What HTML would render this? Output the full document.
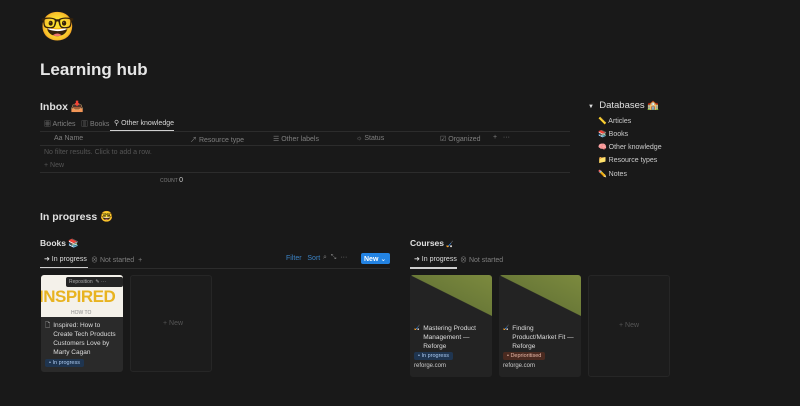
<!DOCTYPE html>
<html><head><meta charset="utf-8"><style>
*{margin:0;padding:0;box-sizing:border-box}
body{width:800px;height:406px;background:#191919;color:#d4d4d4;font-family:"Liberation Sans","Noto Sans CJK JP",sans-serif;position:relative;overflow:hidden;font-size:7px}
.a{position:absolute;white-space:nowrap}
.g{color:#7f7f7f}
.card{position:absolute;background:#232323;border-radius:3px;overflow:hidden}
.line{position:absolute;height:1px;background:#2c2c2c}
.tag{display:inline-block;padding:1px 4px;border-radius:2px;font-size:5.5px}
</style></head><body>
<div class="a" style="left:40px;top:10px;font-size:28px;line-height:34px">🤓</div>
<div class="a" style="left:40px;top:60px;font-size:17px;font-weight:bold;color:#e6e6e6">Learning hub</div>

<div class="a" style="left:40px;top:100px;font-size:10.5px;font-weight:bold;color:#e0e0e0">Inbox 📥</div>
<div class="a g" style="left:44px;top:119px">▦ Articles</div>
<div class="a g" style="left:81px;top:119px">▥ Books</div>
<div class="a" style="left:114px;top:119px;color:#d8d8d8">⚲ Other knowledge</div>
<div class="line" style="left:110px;top:130px;width:64px;height:1.5px;background:#cfcfcf"></div>
<div class="line" style="left:40px;top:131px;width:530px"></div>
<div class="a g" style="left:54px;top:135px">Aa Name</div>
<div class="a g" style="left:190px;top:135px">↗ Resource type</div>
<div class="a g" style="left:273px;top:135px">☰ Other labels</div>
<div class="a g" style="left:356px;top:135px">☼ Status</div>
<div class="a g" style="left:440px;top:135px">☑ Organized</div>
<div class="a g" style="left:493px;top:134px">+ &nbsp; ···</div>
<div class="line" style="left:40px;top:145px;width:530px"></div>
<div class="a" style="left:44px;top:149px;color:#555">No filter results. Click to add a row.</div>
<div class="a" style="left:44px;top:162px;color:#555">+ New</div>
<div class="line" style="left:40px;top:172px;width:530px"></div>
<div class="a g" style="left:160px;top:177px;font-size:5px">COUNT <span style="color:#ccc;font-size:7px">0</span></div>

<div class="a" style="left:40px;top:210px;font-size:10.5px;font-weight:bold;color:#e0e0e0">In progress 🤓</div>

<div class="a" style="left:40px;top:238px;font-size:8.5px;font-weight:bold;color:#e0e0e0">Books 📚</div>
<div class="a" style="left:44px;top:255px;color:#ddd">➜ In progress</div>
<div class="a g" style="left:91px;top:255px">⊗ Not started &nbsp;+</div>
<div class="line" style="left:40px;top:267px;width:48px;height:1.5px;background:#cfcfcf"></div>
<div class="line" style="left:40px;top:268px;width:350px"></div>
<div class="a" style="left:286px;top:255px;color:#3b82c4">Filter &nbsp; Sort</div>
<div class="a g" style="left:323px;top:254px">⌕ &nbsp;⤡ &nbsp;···</div>
<div class="a" style="left:361px;top:253px;width:29px;height:11px;background:#2383e2;border-radius:2px;color:#fff;font-weight:bold;padding:2px 0 0 3px">New <span style="font-weight:normal">⌄</span></div>

<div class="card" style="left:41px;top:275px;width:82px;height:97px;background:#2a2a2a">
 <div style="height:42px;background:#f4f1ea;position:relative">
  <div class="a" style="left:-2px;top:12px;font-size:17px;font-weight:bold;color:#e8b320;letter-spacing:-0.5px">INSPIRED</div>
  <div class="a" style="left:30px;top:35px;font-size:5px;color:#888">HOW TO</div>
  <div class="a" style="left:25px;top:2px;width:57px;height:10px;background:#252525;border-radius:2px;color:#aaa;font-size:5px;padding:2px 3px">Reposition &nbsp;✎ ···</div>
 </div>
 <div style="padding:4px 4px 0 4px;display:flex;gap:3px;font-size:6.5px;line-height:9px;color:#ddd"><span>🗋</span><span>Inspired: How to Create Tech Products Customers Love by Marty Cagan</span></div>
 <div style="padding:2px 4px"><span class="tag" style="background:#1f3550;color:#aac8ee">• In progress</span></div>
</div>
<div class="card" style="left:130px;top:275px;width:82px;height:97px;background:#1c1c1c;border:1px solid #262626"><div class="a g" style="left:32px;top:44px;color:#555">+ New</div></div>

<div class="a" style="left:410px;top:238px;font-size:8.5px;font-weight:bold;color:#e0e0e0">Courses <span style="font-size:6px">🏑</span></div>
<div class="a" style="left:414px;top:255px;color:#ddd">➜ In progress</div>
<div class="a g" style="left:460px;top:255px">⊗ Not started</div>
<div class="line" style="left:410px;top:267px;width:47px;height:1.5px;background:#cfcfcf"></div>

<div class="card" style="left:410px;top:275px;width:82px;height:102px">
 <div style="height:41px;background:linear-gradient(to bottom left,#7c8a3e 0%,#6b7a38 49.5%,#232323 50.5%)"></div>
 <div style="padding:8px 4px 0 4px;display:flex;gap:3px;font-size:6.5px;line-height:9px;color:#ddd"><span style="font-size:5px">🏑</span><span>Mastering Product Management — Reforge</span></div>
 <div style="padding:1px 4px"><span class="tag" style="background:#1f3550;color:#aac8ee">• In progress</span></div>
 <div style="padding:2px 4px;font-size:6px;color:#ccc">reforge.com</div>
</div>
<div class="card" style="left:499px;top:275px;width:82px;height:102px">
 <div style="height:41px;background:linear-gradient(to bottom left,#7c8a3e 0%,#6b7a38 49.5%,#232323 50.5%)"></div>
 <div style="padding:8px 4px 0 4px;display:flex;gap:3px;font-size:6.5px;line-height:9px;color:#ddd"><span style="font-size:5px">🏑</span><span>Finding Product/Market Fit — Reforge</span></div>
 <div style="padding:1px 4px"><span class="tag" style="background:#4a2a20;color:#e6b8a8">• Deprioritised</span></div>
 <div style="padding:2px 4px;font-size:6px;color:#ccc">reforge.com</div>
</div>
<div class="card" style="left:588px;top:275px;width:82px;height:102px;background:#1c1c1c;border:1px solid #262626"><div class="a" style="left:30px;top:46px;color:#555">+ New</div></div>

<div class="a" style="left:588px;top:100px;font-size:9.5px;color:#e0e0e0"><span style="font-size:6px">▼</span>&nbsp; Databases 🏫</div>
<div class="a" style="left:598px;top:117px;font-size:7px;color:#ccc">📏 Articles</div>
<div class="a" style="left:598px;top:130px;font-size:7px;color:#ccc">📚 Books</div>
<div class="a" style="left:598px;top:143px;font-size:7px;color:#ccc">🧠 Other knowledge</div>
<div class="a" style="left:598px;top:156px;font-size:7px;color:#ccc">📁 Resource types</div>
<div class="a" style="left:598px;top:170px;font-size:7px;color:#ccc">✏️ Notes</div>
</body></html>
